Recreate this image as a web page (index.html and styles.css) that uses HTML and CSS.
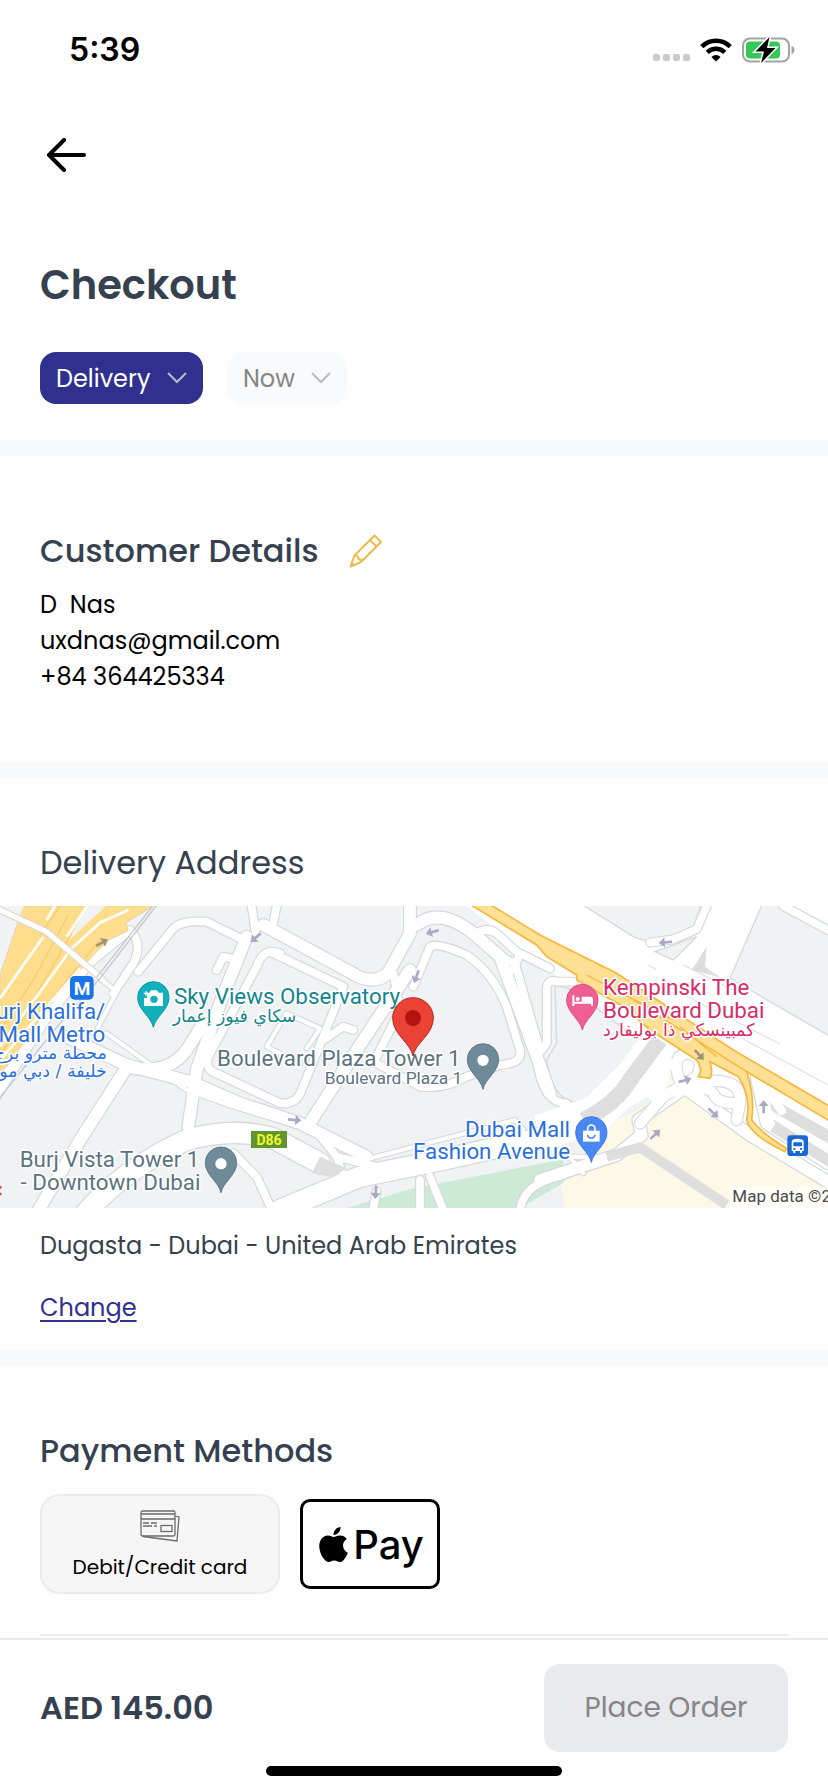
FILE: index.html
```html
<!DOCTYPE html>
<html lang="en">
<head>
<meta charset="UTF-8">
<meta name="viewport" content="width=device-width, initial-scale=1.0">
<title>Checkout</title>
<link rel="stylesheet" href="styles.css">
</head>
<body>
<div class="status-bar">
    <span class="time">5:39</span>
    <div class="status-icons">
        <svg width="37" height="24" viewBox="0 0 37 24" fill="#cbcbcb">
            <rect x="0" y="16" width="7" height="7" rx="2"/>
            <rect x="10" y="16" width="7" height="7" rx="2"/>
            <rect x="20" y="16" width="7" height="7" rx="2"/>
            <rect x="30" y="16" width="7" height="7" rx="2"/>
        </svg>
        <svg width="32" height="24" viewBox="0 0 32 24" fill="none" stroke="#000" stroke-width="4.6">
            <path d="M1.8 8.6a20.3 20.3 0 0 1 28.4 0"/>
            <path d="M7.2 14.4a12.6 12.6 0 0 1 17.6 0"/>
            <path d="M16 23.6l-4.6-4.7a6.7 6.7 0 0 1 9.2 0z" fill="#000" stroke="none"/>
        </svg>
        <svg width="54" height="26" viewBox="0 0 54 26">
            <rect x="1" y="1.5" width="46" height="23" rx="7" fill="none" stroke="#a3a3a3" stroke-width="2"/>
            <path d="M49.5 9c4 1 4 7 0 8z" fill="#a3a3a3"/>
            <rect x="4" y="4.5" width="34" height="17" rx="4" fill="#34c759"/>
            <path d="M27.5 0L13.5 14.5h8.5L19 26l14.5-15h-8.5z" fill="#000" stroke="#fff" stroke-width="3" paint-order="stroke"/>
        </svg>
    </div>
</div>

<nav class="top-nav">
    <button class="icon-btn" aria-label="Back">
        <svg width="40" height="34" viewBox="0 0 40 34" fill="none" stroke="#000" stroke-width="4" stroke-linecap="round" stroke-linejoin="round">
            <path d="M38 17H3M18 2L3 17l15 15"/>
        </svg>
    </button>
</nav>

<main>
    <section class="block order-type">
        <h1>Checkout</h1>
        <div class="selects">
            <div class="select select-primary">
                <select aria-label="Order type"><option>Delivery</option></select>
                <svg width="20" height="12" viewBox="0 0 20 12"><path d="M1 1l9 9 9-9"/></svg>
            </div>
            <div class="select">
                <select aria-label="Order time"><option>Now</option></select>
                <svg width="20" height="12" viewBox="0 0 20 12"><path d="M1 1l9 9 9-9"/></svg>
            </div>
        </div>
    </section>

    <section class="block customer">
        <div class="title-row">
            <h2>Customer Details</h2>
            <button class="icon-btn" aria-label="Edit customer details">
                <svg width="34" height="34" viewBox="0 0 34 34" fill="none" stroke="#ecbc4e" stroke-width="2" stroke-linejoin="round">
                    <path d="M1.5 32.5l4-11L25.500 1.500l6.500 6.500L12 28z"/>
                    <path d="M21 6l6.500 6.500M5.500 21.500l3.500 1 .5 2.500 2.500 1v2M1.500 32.500l3-3"/>
                </svg>
            </button>
        </div>
        <p class="name">D  Nas</p>
        <p>uxdnas@gmail.com</p>
        <p>+84 364425334</p>
    </section>

    <section class="block address">
        <h2 class="light">Delivery Address</h2>
        <svg class="map" viewBox="0 48 2484 906" role="img" aria-label="Map">
            <defs>
                <path id="pin" d="M0 90C-6 58-47 38-47 0A47 47 0 1 1 47 0C47 38 6 58 0 90z"/>
                <path id="arrow" d="M-20-4H2v-11L20 0 2 15V4h-22z"/>
                <g id="roads-s">
                    <path d="M320 430L560 600 700 650 1000 740"/>
                    <path d="M280 440L350 305 300 265"/>
                    <path d="M1110 805L1545 690 1570 720"/>
                    <path d="M800 470l60-100 100 45-40 60M800 470l100 50"/>
                    <path d="M1690 780l60 70M1710 800h100"/>
                </g>
                <g id="roads-m">
                    <path d="M390 120Q430 160 400 220L340 310"/>
                    <path d="M415 245L520 115Q545 90 620 95L730 150"/>
                    <path d="M650 240l20-40 30 6"/>
                    <path d="M755 48l12 80M830 48l-15 75"/>
                    <path d="M840 190Q790 170 770 230L625 500Q610 540 660 555L840 640Q890 645 905 600L970 440 1030 290 810 185"/>
                    <path d="M970 450l60-40 30 10M1130 500l70-140-20-110"/>
                    <path d="M1240 290L1290 170Q1310 155 1400 195 1480 250 1520 350L1560 480Q1570 520 1500 525L1400 560Q1330 600 1260 590L1130 520"/>
                    <path d="M1430 130q30-20 60 0l60 55 100 50M1540 240l20-50M1480 190l65 30 75 260"/>
                    <path d="M1720 275h-50Q1640 265 1640 300V460l-30 40Q1625 640 1700 640"/>
                    <path d="M700 790L770 860 820 970"/>
                    <path d="M1260 870V960M1290 860L1330 960M1560 960Q1570 880 1690 855"/>
                    <path d="M930 700l80 100 120 30M1010 800l20 60M1120 954l10-50"/>
                    <path d="M2484 120L2350 48M2120 48l-30 70-70 30-70 10"/>
                </g>
                <g id="roads-l">
                    <path d="M375 125L265 215 130 390 20 560-60 690"/>
                    <path d="M790 105L1080 262Q1150 285 1175 230L1230 130V30"/>
                    <path d="M740 140L660 340 590 540 565 710"/>
                    <path d="M200 440L380 525 570 575 720 640 900 700 1100 800"/>
                    <path d="M375 540L240 750 110 970"/>
                    <path d="M380 530Q500 560 560 480L610 400"/>
                    <path d="M1230 240L1090 450 935 690"/>
                    <path d="M1250 105Q1320 50 1420 130L1500 200 1570 390 1650 610"/>
                    <path d="M1620 870L1850 795 1925 735 1915 690 2060 590"/>
                    <path d="M2050 590L2250 735 2500 885"/>
                    <path d="M2270 560L2300 700 2484 820"/>
                </g>
                <g id="roads-xl">
                    <path d="M240 990Q360 840 560 750 700 710 820 745L960 820"/>
                    <path d="M840 960L1080 860 1300 815 1620 745 1760 690"/>
                </g>
            </defs>

            <rect x="0" y="48" width="2484" height="906" fill="#f0f2f4"/>

            <!-- parks and malls -->
            <path d="M1040 954L1240 895 1690 808V880L1560 954z" fill="#cdead6"/>
            <path d="M1695 954L1680 885 1790 820 1780 760 1850 690 1950 640 2060 590 2484 850V954z" fill="#fdf9e6"/>

            <!-- boulevard -->
            <path d="M1400 48H2484V870L2060 600 1960 610 1840 680 1620 780V700L1820 560 1900 430 1620 220z" fill="#fff"/>
            <g fill="#f0f2f4" stroke="#d6d9dd" stroke-width="4">
                <path d="M1740 40L1900 140Q1930 155 1980 155L2080 115 2105 40z"/>
                <path d="M2288 40L2190 265 2500 445V140L2350 48V40z"/>
                <path d="M1965 185L2020 210 2090 140z"/>
                <path d="M1665 285L1720 300 1920 455 1850 570 1750 635Q1660 650 1640 510L1670 460z"/>
            </g>
            <path d="M2075 240L2120 170 2115 230 2160 262z" fill="#dcdcde"/>
            <g fill="none" stroke="#d6d9dd" stroke-width="3">
                <path d="M1945 225L1970 240M1985 280L2340 462M2050 225L2200 300M2180 420L2484 585M2300 620L2484 720"/>
            </g>

            <!-- street network: outline first, then surface -->
            <g fill="none" stroke="#d4d7db" stroke-linejoin="round" stroke-linecap="round">
                <use href="#roads-s" stroke-width="18"/>
                <use href="#roads-m" stroke-width="30"/>
                <use href="#roads-l" stroke-width="42"/>
                <use href="#roads-xl" stroke-width="68"/>
            </g>
            <g fill="none" stroke="#fff" stroke-linejoin="round" stroke-linecap="round">
                <use href="#roads-s" stroke-width="12"/>
                <use href="#roads-m" stroke-width="23"/>
                <use href="#roads-l" stroke-width="35"/>
                <use href="#roads-xl" stroke-width="61"/>
            </g>

            <!-- Sheikh Zayed Road -->
            <path d="M70 48H460L378 98 385 122 330 148 285 190 165 325 20 530 0 548V255z" fill="#fede8c" stroke="#e3d3ae" stroke-width="3"/>
            <path d="M262 48H318L205 152zM0 48h72L0 220z" fill="#f0f2f4"/>
            <g fill="none" stroke="#f8cb6c" stroke-width="4">
                <path d="M205 75L100 270 0 420M215 130L60 400 0 500M180 48L120 135M300 150L120 370"/>
            </g>
            <g fill="none" stroke="#fff" stroke-width="8">
                <path d="M165 48L140 90M130 140L0 325M262 48L200 140M385 60L300 98 215 175 0 470M240 235L0 510"/>
            </g>
            <path d="M-10 55L140 125 310 270" fill="none" stroke="#d9d6cc" stroke-width="22"/>
            <path d="M-10 55L140 125 310 270" fill="none" stroke="#fff" stroke-width="16"/>

            <!-- tunnels -->
            <g fill="none" stroke="#dedede">
                <path d="M1620 730L1790 670 1900 560 1990 440" stroke="#fff" stroke-width="110"/>
                <path d="M1750 690Q1850 640 1890 570L1980 450" stroke-width="48"/>
                <path d="M1820 800L1920 772 2180 945" stroke-width="30"/>
                <path d="M2310 640L2500 750M2320 710L2500 820" stroke-width="34"/>
                <path d="M935 850L960 800 1040 835 1000 862z" fill="#dedede" stroke="none"/>
            </g>

            <!-- interchange -->
            <path d="M1990 590L2030 530 2040 560z" fill="#fdf9e6"/>
            <g fill="none" stroke-linecap="round">
                <g stroke="#d9dbdf" stroke-width="38">
                    <path d="M2040 575Q2010 500 2060 490 2120 500 2090 560L1990 620 1920 700"/>
                    <path d="M2080 580Q2230 550 2220 640L2210 690M2210 640Q2150 640 2140 610"/>
                </g>
                <g stroke="#fff" stroke-width="31">
                    <path d="M2040 575Q2010 500 2060 490 2120 500 2090 560L1990 620 1920 700"/>
                    <path d="M2080 580Q2230 550 2220 640L2210 690M2210 640Q2150 640 2140 610"/>
                    <path d="M1920 600L2010 520M1960 620L2080 590 2130 600"/>
                </g>
                <path d="M2345 662l-50-70M2290 610l20 90" stroke="#fff" stroke-width="26"/>
            </g>
            <path d="M1405 40H1465L1620 135 1850 250 2040 375 2200 480 2500 655V700L2240 545Q2265 620 2255 690 2290 735 2360 775L2355 785Q2250 735 2240 690 2255 620 2215 560L2130 515Q2140 550 2130 565L2095 560Q2110 540 2090 510L1950 420 1870 350 1730 270 1730 255 1640 200 1610 165z" fill="#fde093" stroke="#f8b63c" stroke-width="5"/>
            <path d="M1760 255L2020 390M1900 330L2240 545M2040 410L2150 500" fill="none" stroke="#f9b53a" stroke-width="4"/>

            <!-- metro line -->
            <path d="M468 48L300 265 180 400 0 622M458 48L290 262" fill="none" stroke="#c3c8cc" stroke-width="4"/>

            <g fill="#aaa9c6">
                <use href="#arrow" transform="translate(767 143) rotate(140)"/>
                <use href="#arrow" transform="translate(1297 126) rotate(165)"/>
                <use href="#arrow" transform="translate(1249 260) rotate(110)"/>
                <use href="#arrow" transform="translate(884 690) rotate(5)"/>
                <use href="#arrow" transform="translate(1127 907) rotate(95)"/>
                <use href="#arrow" transform="translate(1996 157) rotate(175)"/>
                <use href="#arrow" transform="translate(2055 571) rotate(-15)"/>
                <use href="#arrow" transform="translate(2140 669) rotate(42)"/>
                <use href="#arrow" transform="translate(1966 733) rotate(-42)"/>
                <use href="#arrow" transform="translate(2291 650) rotate(-90)"/>
            </g>
            <g fill="#a3937c">
                <use href="#arrow" transform="translate(306 158) rotate(-30)"/>
                <use href="#arrow" transform="translate(2098 495) rotate(48)"/>
            </g>

            <!-- metro and bus stops -->
            <rect x="210" y="258" width="71" height="71" rx="14" fill="#1a73e8"/>
            <text class="metro" x="246" y="314">M</text>
            <rect x="2362" y="736" width="62" height="62" rx="10" fill="#1967d2"/>
            <path d="M2375 755q0-9 18-9t18 9v28h-5v6h-6v-6h-14v6h-6v-6h-5z" fill="#fff"/>
            <path d="M2380 757h26v12h-26zM2380 774h6v5h-6zM2400 774h6v5h-6z" fill="#1967d2"/>
            <path d="M0 888h4v8h-4zM0 908h4v8h-4z" fill="#e5382b"/>

            <rect x="753" y="723" width="108" height="51" fill="#5e9732"/>
            <text class="route" x="807" y="764">D86</text>

            <!-- pins -->
            <use href="#pin" x="460" y="322" fill="#12b0bd" stroke="#0c97a5" stroke-width="3"/>
            <path d="M441 308h7l5-7h18l5 7h13v40h-57v-24h9z" fill="#fff"/>
            <circle cx="462" cy="328" r="11" fill="#12b0bd"/>
            <path d="M438 303v14M431 310h14" stroke="#fff" stroke-width="4"/>
            <use href="#pin" x="663" y="818" fill="#6f8a98" stroke="#5d7886" stroke-width="3"/>
            <circle cx="663" cy="821" r="17" fill="#fff"/>
            <use href="#pin" x="1449" y="508" fill="#6f8a98" stroke="#5d7886" stroke-width="3"/>
            <circle cx="1449" cy="511" r="17" fill="#fff"/>
            <use href="#pin" x="1747" y="330" fill="#ef5f92" stroke="#e04a82" stroke-width="3"/>
            <path d="M1717 316h6v19h22v-15h26q8 0 8 9v19h-6v-7h-50v7h-6z" fill="#fff"/>
            <circle cx="1733" cy="327" r="6" fill="#fff"/>
            <use href="#pin" x="1774" y="727" fill="#4a89f3" stroke="#3a78e6" stroke-width="3"/>
            <path d="M1749 722h50v33h-50z" fill="#fff"/>
            <path d="M1763 722v-6a11 11 0 0 1 22 0v6" fill="none" stroke="#fff" stroke-width="5"/>
            <path d="M1763 734a11 10 0 0 0 22 0" fill="none" stroke="#4a89f3" stroke-width="5"/>

            <g class="place teal">
                <text x="522" y="343">Sky Views Observatory</text>
                <text class="ar" x="518" y="397">سكاي فيوز إعمار</text>
            </g>
            <g class="place blue end">
                <text x="316" y="388">Burj Khalifa/</text>
                <text x="316" y="455">Mall Metro</text>
                <text class="ar" x="320" y="508">محطة مترو برج</text>
                <text class="ar" x="320" y="562">خليفة / دبي مول</text>
            </g>
            <g class="place slate end">
                <text x="1382" y="528">Boulevard Plaza Tower 1</text>
                <text class="sub" x="1387" y="583">Boulevard Plaza 1</text>
                <text x="598" y="832">Burj Vista Tower 1</text>
                <text x="601" y="899">- Downtown Dubai</text>
            </g>
            <g class="place blue end">
                <text x="1710" y="741">Dubai Mall</text>
                <text x="1710" y="808">Fashion Avenue</text>
            </g>
            <g class="place pink">
                <text x="1809" y="315">Kempinski The</text>
                <text x="1809" y="383">Boulevard Dubai</text>
                <text class="ar" x="1809" y="438">كمبينسكي ذا بوليفارد</text>
            </g>

            <g transform="translate(1239 384)">
                <path d="M0 114C-7 74-61 50-61 0A61 61 0 1 1 61 0C61 50 7 74 0 114z" fill="#ea4335" stroke="#b5271b" stroke-width="3"/>
                <circle r="24" fill="#b31412"/>
            </g>

            <rect x="2187" y="890" width="297" height="64" fill="#fff" fill-opacity=".7"/>
            <text class="credit" x="2197" y="937">Map data ©2</text>
        </svg>
        <p class="place-name">Dugasta - Dubai - United Arab Emirates</p>
        <a class="change" href="#">Change</a>
    </section>

    <section class="payment">
        <h2>Payment Methods</h2>
        <div class="methods">
            <button class="card-btn">
                <svg width="40" height="32" viewBox="0 0 40 32" fill="none" stroke="#6b6b6b" stroke-width="1.3">
                    <rect x="1" y="1" width="34" height="25" rx="1.5"/>
                    <path d="M1 4h34M1 9h34"/>
                    <path d="M35.500 6l3.500 1-2 24-34-4.500"/>
                    <path d="M3 13h6M11 13h6M3 16h9M14 16h3" stroke-width="1.600"/>
                    <rect x="21" y="15.500" width="11" height="6"/>
                </svg>
                <span>Debit/Credit card</span>
            </button>
            <button class="apple-btn" aria-label="Apple Pay">
                <svg width="35" height="35" viewBox="0 0 24 24"><path d="M12.152 6.896c-.948 0-2.415-1.078-3.96-1.040-2.040.027-3.910 1.183-4.961 3.014-2.117 3.675-.546 9.103 1.519 12.090 1.013 1.454 2.208 3.090 3.792 3.039 1.520-.065 2.090-.987 3.935-.987 1.831 0 2.350.987 3.960.948 1.637-.026 2.676-1.480 3.676-2.948 1.156-1.688 1.636-3.325 1.662-3.415-.039-.013-3.182-1.221-3.220-4.857-.026-3.040 2.480-4.494 2.597-4.559-1.429-2.090-3.623-2.324-4.390-2.376-2-.156-3.675 1.090-4.610 1.090zM15.530 3.830c.843-1.012 1.400-2.427 1.245-3.830-1.207.052-2.662.805-3.532 1.818-.780.896-1.454 2.338-1.273 3.714 1.338.104 2.715-.688 3.559-1.701"/></svg>
                <span>Pay</span>
            </button>
        </div>
        <hr>
    </section>
</main>

<footer>
    <div class="summary">
        <strong>AED 145.00</strong>
        <button class="place-order">Place Order</button>
    </div>
    <div class="home-indicator"></div>
</footer>
</body>
</html>
```

FILE: styles.css
```css
* {
    box-sizing: border-box;
}

body {
    font-family: Poppins, Inter, sans-serif;
    font-size: 24px;
    line-height: 36px;
    margin: 0;
    color: #000;
    background-color: #fefefe;
}

h1, h2, p {
    margin: 0;
}

h1 {
    font-size: 40px;
    line-height: 48px;
    font-weight: 600;
    color: #36414f;
}

h2 {
    font-size: 32px;
    line-height: 40px;
    font-weight: 500;
    color: #36414f;
}

h2.light {
    font-weight: 400;
}

button, select {
    font-family: inherit;
    cursor: pointer;
}

.status-bar {
    display: flex;
    justify-content: space-between;
    align-items: center;
    height: 100px;
    padding: 0 32px 0 69px;
}

.time {
    font-family: Inter, sans-serif;
    font-size: 32px;
    font-weight: 600;
}

.status-icons {
    display: flex;
    align-items: center;
    gap: 10px;
}

.top-nav {
    display: flex;
    align-items: center;
    height: 110px;
    padding: 0 46px;
}

.icon-btn {
    display: flex;
    padding: 0;
    border: none;
    background: none;
}

.block {
    border-bottom: 16px solid #f7f9fb;
}

.order-type {
    padding: 51px 40px 36px;
}

.selects {
    display: flex;
    gap: 24px;
    margin-top: 43px;
}

/* the arrow shares the select's grid cell */
.select {
    display: grid;
    align-items: center;
    justify-items: end;
}

.select select,
.select svg {
    grid-area: 1 / 1;
}

.select select {
    appearance: none;
    height: 52px;
    padding: 0 52px 0 16px;
    border: none;
    border-radius: 16px;
    font-size: 24px;
    color: #868686;
    background-color: #f8fafc;
}

.select svg {
    margin-right: 16px;
    fill: none;
    stroke: #b9bcc6;
    stroke-width: 2;
    pointer-events: none;
}

.select-primary select {
    color: #fff;
    background-color: #30308e;
}

.customer {
    padding: 75px 40px 67px;
}

.title-row {
    display: flex;
    align-items: center;
    gap: 30px;
    margin-bottom: 16px;
}

.name {
    white-space: pre;
}

.address {
    padding: 65px 0 24px;
}

.address h2,
.place-name {
    padding: 0 40px;
}

.map {
    display: block;
    width: 100%;
    margin: 23px 0 20px;
    font-family: Roboto, sans-serif;
}

.place text {
    font-size: 67px;
    paint-order: stroke;
    stroke: #fff;
    stroke-width: 9px;
    stroke-linejoin: round;
}

.place .ar {
    font-family: "DejaVu Sans", sans-serif;
    font-size: 52px;
}

.place .sub {
    font-size: 52px;
}

.end {
    text-anchor: end;
}

.teal {
    fill: #12858d;
}

.blue {
    fill: #2a70dc;
}

.slate {
    fill: #5b7380;
}

.pink {
    fill: #d72c68;
}

.metro, .route {
    text-anchor: middle;
    font-weight: 700;
}

.metro {
    font-size: 57px;
    fill: #fff;
}

.route {
    font-size: 42px;
    fill: #f3f42a;
}

.credit {
    font-size: 51px;
    fill: #4b4b4b;
}

.place-name {
    color: #36414f;
}

.change {
    display: inline-block;
    margin: 26px 40px 0;
    color: #30308e;
    text-decoration-thickness: 2px;
    text-underline-offset: 4px;
    vertical-align: top;
}

.payment {
    padding: 65px 40px 0;
}

.methods {
    display: flex;
    align-items: center;
    gap: 20px;
    margin: 23px 0 40px;
}

.card-btn {
    display: flex;
    flex-direction: column;
    align-items: center;
    gap: 11px;
    width: 240px;
    height: 100px;
    padding: 14px 0 0;
    border: 2px solid #ebebeb;
    border-radius: 20px;
    font-size: 20px;
    line-height: 28px;
    color: #000;
    background-color: #f6f6f6;
}

.apple-btn {
    display: flex;
    justify-content: center;
    align-items: center;
    gap: 2px;
    width: 140px;
    height: 90px;
    padding: 0;
    border: 3px solid #000;
    border-radius: 10px;
    font-family: Inter, sans-serif;
    font-size: 40px;
    font-weight: 500;
    color: #000;
    background-color: #fff;
}

hr {
    height: 2px;
    margin: 0 0 2px;
    border: none;
    background-color: #ebebed;
}

footer {
    position: sticky;
    bottom: 0;
    padding-bottom: 16px;
    border-top: 2px solid #ebebed;
    background-color: #fefefe;
}

.summary {
    display: flex;
    justify-content: space-between;
    align-items: center;
    padding: 24px 40px 14px;
}

.summary strong {
    font-size: 32px;
    font-weight: 600;
    color: #36414f;
}

.place-order {
    width: 244px;
    height: 88px;
    border: none;
    border-radius: 16px;
    font-size: 28px;
    color: #868686;
    background-color: #e9eaed;
}

.home-indicator {
    width: 296px;
    height: 10px;
    margin: 0 auto;
    border-radius: 5px;
    background-color: #000;
}
```
